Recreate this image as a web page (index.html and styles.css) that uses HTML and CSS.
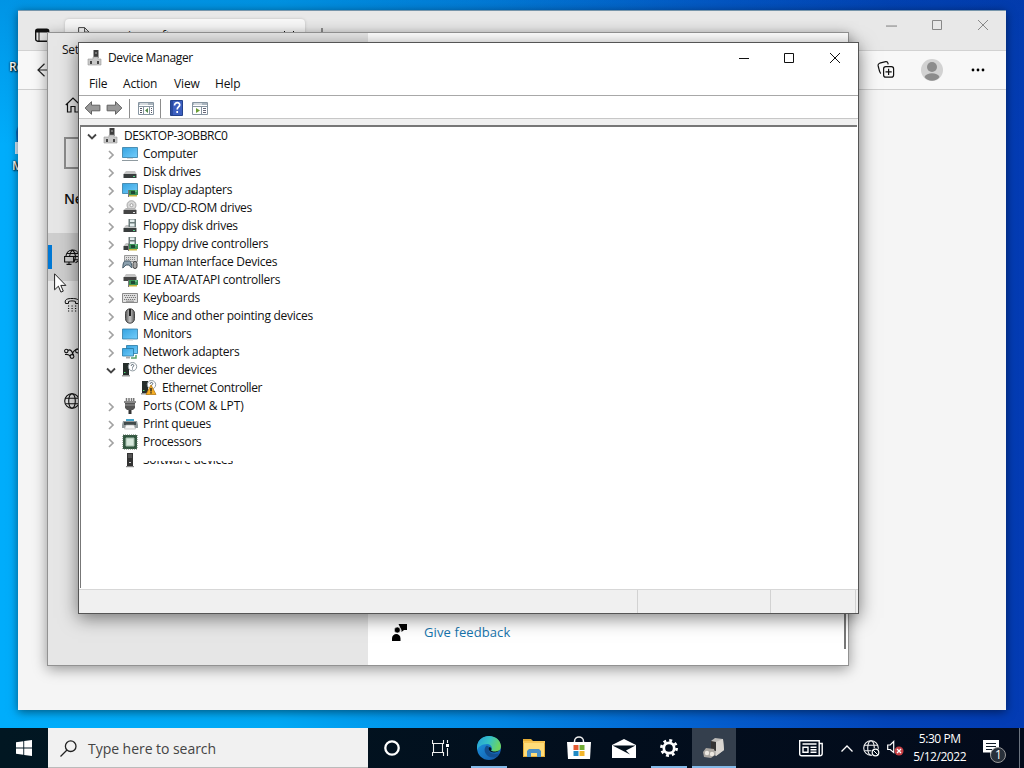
FILE: index.html
```html
<!DOCTYPE html>
<html lang="en">

<head>
    <meta charset="UTF-8" />
    <meta name="viewport" content="width=device-width, initial-scale=1.0" />
    <title>Desktop</title>
    <link rel="stylesheet" href="styles.css">
</head>

<body>
    <!-- shared icons -->
    <svg class="sprite" width="0" height="0">
        <defs>
            <linearGradient id="screen" x1="0" y1="0" x2="1" y2="1">
                <stop offset="0" stop-color="#35a3e0" />
                <stop offset="1" stop-color="#74cdfb" />
            </linearGradient>
            <linearGradient id="metal" x1="0" y1="0" x2="1" y2="0">
                <stop offset="0" stop-color="#555" />
                <stop offset=".5" stop-color="#c8c8c8" />
                <stop offset="1" stop-color="#555" />
            </linearGradient>
            <symbol id="chev-right" viewBox="0 0 16 16"><path d="M6 5l4 4-4 4" fill="none" stroke="#a2a2a2" stroke-width="1.700" /></symbol>
            <symbol id="chev-down" viewBox="0 0 16 16"><path d="M4 6.500l4 4 4-4" fill="none" stroke="#444" stroke-width="1.800" /></symbol>
            <symbol id="pc" viewBox="0 0 16 16">
                <path d="M6.500 0h5v8h-5z" fill="#3c3c3c" /><path d="M8 2h2v2H8z" fill="#777" />
                <path d="M1 9h5V7h5v2h3v6H1z" fill="#c9c9c9" stroke="#999" stroke-width=".6" />
                <path d="M3 11h2v3H3zM10 11h2v3h-2z" fill="#444" />
            </symbol>
            <symbol id="computer" viewBox="0 0 16 16">
                <path d="M.5 1.500h15v10H.5z" fill="url(#screen)" stroke="#347ca5" stroke-width=".8" />
                <path d="M5 12h6v1H5z" fill="#d8d8d8" /><path d="M0 14h16v1H0z" fill="#8f9aa0" />
            </symbol>
            <symbol id="disk" viewBox="0 0 16 16">
                <path d="M4 7h9l1.500 3h-13z" fill="#c3c3c3" /><path d="M1.500 10h13v4h-13z" fill="#383d3d" />
                <path d="M11 12h2v1h-2z" fill="#58d58b" />
            </symbol>
            <symbol id="board" viewBox="0 0 16 16">
                <path d="M6 8h10v5H6z" fill="#3a9156" /><path d="M9 9h4v3H9z" fill="#1d4a33" /><path d="M7 13h8v1.500H7z" fill="#c6b43d" /><path d="M6 8h1v7H6z" fill="#777" />
                <path d="M13 8.500h2v1h-2z" fill="#8de3a7" />
            </symbol>
            <symbol id="display" viewBox="0 0 16 16">
                <path d="M.5 1.500h15v10H.5z" fill="url(#screen)" stroke="#347ca5" stroke-width=".8" />
                <use href="#board" />
            </symbol>
            <symbol id="dvd" viewBox="0 0 16 16">
                <circle cx="9.500" cy="5.200" r="4.500" fill="#d9d9d9" stroke="#999" stroke-width=".8" /><circle cx="9.500" cy="5.200" r="1.500" fill="#fff" stroke="#888" stroke-width=".7" />
                <path d="M4 8h9l1.500 2h-13z" fill="#b5b5b5" /><path d="M1.500 10h13v4h-13z" fill="#444" /><path d="M11 12h2v1h-2z" fill="#ddd" />
            </symbol>
            <symbol id="floppy" viewBox="0 0 16 16">
                <use href="#disk" /><path d="M6.500 1h7.500v8H6.500z" fill="#6d7c7c" /><path d="M8 1.500h4.500v2.500H8zM8 5.500h4.500v3H8z" fill="#e5eeee" />
            </symbol>
            <symbol id="floppy-ctl" viewBox="0 0 16 16"><use href="#floppy" /><use href="#board" /></symbol>
            <symbol id="hid" viewBox="0 0 16 16">
                <path d="M2.500 1.500h13v6h-13z" fill="#ddd" stroke="#999" /><path d="M4 3.500h10M4 5.500h10" stroke="#888" stroke-dasharray="1 1" />
                <path d="M.8 14c0-4 1-7 2.500-7h4c1.500 0 2.500 3 2.500 7l-3-3H4z" fill="#8ba0ae" stroke="#465b69" />
                <rect x="11" y="7.500" width="4" height="7" rx="2" fill="#a9a9a9" stroke="#444" />
            </symbol>
            <symbol id="ide" viewBox="0 0 16 16">
                <path d="M2 5l2-3h9l2 3z" fill="#c4c4c4" /><path d="M1.500 5h13v4h-13z" fill="#444" /><use href="#board" />
            </symbol>
            <symbol id="keyboard" viewBox="0 0 16 16">
                <path d="M.5 3.500h15v9H.5z" fill="#e0e0e0" stroke="#8b8b8b" />
                <path d="M2 5.500h12M3 7.500h11M2 9.500h12" stroke="#777" stroke-dasharray="1.200 .8" /><path d="M4 11.200h8" stroke="#888" />
            </symbol>
            <symbol id="mouse" viewBox="0 0 16 16">
                <rect x="3.500" y=".8" width="9" height="14.400" rx="4.500" fill="url(#metal)" stroke="#444" /><path d="M8 1v7" stroke="#222" stroke-width="2" />
            </symbol>
            <symbol id="monitor" viewBox="0 0 16 16">
                <path d="M.5 3h15v10H.5z" fill="url(#screen)" stroke="#347ca5" stroke-width=".8" /><path d="M5 13.500h6v1H5z" fill="#ccc" />
            </symbol>
            <symbol id="network" viewBox="0 0 16 16">
                <path d="M4.500 1.500h11v8h-11z" fill="url(#screen)" stroke="#2578a5" stroke-width=".8" />
                <path d="M.5 4.500h11v7.500H.5z" fill="url(#screen)" stroke="#2578a5" stroke-width=".8" />
                <path d="M4 12.500h4v2H4z" fill="#aaa" /><path d="M9 14h5v-3" fill="none" stroke="#56a067" stroke-width="1.500" />
            </symbol>
            <symbol id="other" viewBox="0 0 16 16">
                <path d="M1 1h6v12H1z" fill="#262e2b" /><path d="M0 13h8v1.500H0z" fill="#999" /><path d="M2 10h1.500v1H2z" fill="#50d877" />
                <circle cx="10.500" cy="4.700" r="4.200" fill="#fff" stroke="#8f9aa0" />
                <path d="M9.200 3.800c0-2 2.700-1.700 2.500-.1 0 .9-1.200 1-1.200 2M10.500 6.500v1" fill="none" stroke="#4f5f6a" />
            </symbol>
            <symbol id="warning" viewBox="0 0 16 16">
                <use href="#other" /><path d="M10 5l5 9.500H5z" fill="#f6ae22" stroke="#b57a18" stroke-width=".8" /><path d="M10 8v3.500M10 12.300v1.200" stroke="#222" stroke-width="1.400" />
            </symbol>
            <symbol id="port" viewBox="0 0 16 16">
                <path d="M4.500 0v3M7 0v3M9.500 0v3M11.700 0v3" stroke="#777" stroke-width="1.500" /><path d="M2 3h12v2H2z" fill="#888" />
                <path d="M3 5h10v5l-2 2H5l-2-2z" fill="#565656" /><path d="M3 7h10" stroke="#999" /><path d="M6.500 12h3v4h-3z" fill="#333" />
            </symbol>
            <symbol id="printer" viewBox="0 0 16 16">
                <path d="M4 3h8v3H4z" fill="#43a4ca" /><path d="M1 5h14l1 4v3H0V9z" fill="#929b9d" /><path d="M2 6h12v3H2z" fill="#414a4a" />
                <path d="M4 9h8l1.500 4h-11z" fill="#f8f8f8" stroke="#aaa" stroke-width=".6" />
            </symbol>
            <symbol id="cpu" viewBox="0 0 16 16">
                <path d="M1 1h14v14H1z" fill="#31563f" stroke="#526a59" stroke-dasharray="1 1" /><path d="M4 4h8v8H4z" fill="#d7e8dc" stroke="#a3bcaa" />
            </symbol>
            <symbol id="software" viewBox="0 0 16 16">
                <path d="M5 1h6v13H5z" fill="#333" /><path d="M6 3h4M6 5h4" stroke="#777" /><path d="M7 10h2v1H7z" fill="#ccc" /><path d="M4 14h8v1.200H4z" fill="#888" />
            </symbol>
            <symbol id="arrow-left" viewBox="0 0 16 16"><path d="M.6 8L7 1.700v3.500h8.400v5.600H7v3.500z" fill="#989898" stroke="#606060" stroke-linejoin="round" /></symbol>
            <symbol id="panel" viewBox="0 0 16 16">
                <path d="M.5 2.500h15v12H.5z" fill="#fff" stroke="#8795a1" /><path d="M1 3h14v2H1z" fill="#aab5be" /><path d="M2 4h8" stroke="#fff" /><path d="M1 6.500h14" stroke="#8795a1" />
            </symbol>
            <symbol id="min" viewBox="0 0 10 10"><path d="M0 5.500h10" fill="none" stroke="currentColor" /></symbol>
            <symbol id="max" viewBox="0 0 10 10"><path d="M.5.5h9v9h-9z" fill="none" stroke="currentColor" /></symbol>
            <symbol id="close" viewBox="0 0 10 10"><path d="M0 0l10 10M10 0L0 10" fill="none" stroke="currentColor" /></symbol>
            <symbol id="globe" viewBox="0 0 16 16">
                <g fill="none" stroke="currentColor" stroke-width="1.100"><circle cx="8" cy="8" r="7.300" /><ellipse cx="8" cy="8" rx="3.300" ry="7.300" /><path d="M1.500 5.300h13M1.500 10.700h13" /></g>
            </symbol>
        </defs>
    </svg>

    <div class="desktop">
        <div class="shortcut recycle">Re</div>
        <div class="shortcut edge-link">
            <svg width="28" height="60"><path d="M4 14C6 5 11 1 20 0v30H5z" fill="#0869be" /><path d="M3 24h20v12H3z" fill="#d9efff" /></svg>
            <span>Mi</span>
        </div>

        <div class="window browser">
            <div class="browser-tabs">
                <svg class="tab-menu" width="16" height="16" viewBox="0 0 16 16"><rect x="1.700" y="2.200" width="13" height="12" rx="2" fill="none" stroke="#111" stroke-width="1.400" /><path d="M2 2.500h12v3H2z" fill="#111" /><path d="M5 5v9" stroke="#111" /></svg>
                <div class="tab">
                    <svg width="12" height="16" viewBox="0 0 12 16"><path d="M.6.6h6l4.500 4.500V15H.6zM6.600.6v4.500h4.500" fill="none" stroke="#444" /></svg>
                    <span>go.microsoft.com</span>
                    <svg class="tab-close" width="10" height="10"><use href="#close" /></svg>
                </div>
                <svg class="tab-add" width="12" height="12"><path d="M6 0v12M0 6h12" stroke="#333" /></svg>
                <div class="controls">
                    <span><svg width="11" height="11"><use href="#min" /></svg></span>
                    <span><svg width="10" height="10"><use href="#max" /></svg></span>
                    <span><svg width="10" height="10"><use href="#close" /></svg></span>
                </div>
            </div>
            <div class="browser-bar">
                <svg class="back" width="16" height="14" viewBox="0 0 16 14"><path d="M7.500.8L1 7l6.500 6.200M1 7h15" fill="none" stroke="#222" stroke-width="1.200" /></svg>
                <svg class="collections" width="18" height="18" viewBox="0 0 18 18"><g fill="none" stroke="#111" stroke-width="1.200"><path d="M4 12.500C2.500 12 2.500 10 1.200 5c-.4-1.700.2-2.400 1.500-2.800l6-1.500c1.300-.2 2 .3 2.300 1.700l.2 1" /><rect x="6.600" y="5.600" width="10" height="10.500" rx="2.200" /><path d="M8.500 10.800h6.200M11.600 7.700v6.200" /></g></svg>
                <svg class="avatar" width="22" height="22" viewBox="0 0 22 22"><circle cx="11" cy="11" r="11" fill="#d2d2d2" /><circle cx="11" cy="8" r="5" fill="#8c8c8c" /><path d="M3.500 18c2-5 13-5 15 0-3.500 5-11.500 5-15 0z" fill="#8c8c8c" /></svg>
                <svg class="dots" width="14" height="4"><circle cx="2" cy="2" r="1.400" /><circle cx="7" cy="2" r="1.400" /><circle cx="12" cy="2" r="1.400" /></svg>
            </div>
        </div>

        <div class="window settings">
            <div class="settings-nav">
                <div class="settings-title">Set</div>
                <svg class="home" width="16" height="16" viewBox="0 0 16 16"><path d="M.8 8L8 1l7.200 7M2.500 6.500V15H6V9.500h4V15h3.500V6.500" fill="none" stroke="#111" stroke-width="1.200" /></svg>
                <div class="settings-search">F</div>
                <h2>Net</h2>
                <ul class="nav-list">
                    <li class="nav-item active"><svg width="16" height="16" viewBox="0 0 16 16"><g fill="none" stroke="#111" stroke-width="1.100"><path d="M2 7.500a6.700 6.700 0 1 1 9.500 6.300M3 4.500h11.500M8.500.8C6 3 5.700 5 5.700 7.500M8.500.8c3 3 3.500 8 1.500 12.500M2 7.500h13.300M10 10.800h4.500" /><path d="M.6 7.500h9v5.500h-9zM5 13v2M2.500 15.400h5" /></g></svg></li>
                    <li class="nav-item"><svg width="16" height="16" viewBox="0 0 16 16"><path d="M1.500 6.500C0 2 4 1.500 8 1.500S16 2 14.500 6.500h-3v-2c-2-.8-5-.8-7 0v2z" fill="none" stroke="#111" /><path d="M4 9h9M4 11.500h9M4 14h9" stroke="#111" stroke-dasharray="1.200 2.300" /></svg></li>
                    <li class="nav-item"><svg width="16" height="16" viewBox="0 0 16 16"><g fill="none" stroke="#111" stroke-width="1.100"><circle cx="2.300" cy="6" r="1.700" /><circle cx="8" cy="11.500" r="1.900" /><circle cx="13.500" cy="6" r="1.900" /><path d="M4 5.500C7 3.500 8 7 9.500 10M6.300 11C4.500 9.500 3.500 9 1 9.500M8 9.500C9 6.500 10.500 4 15 4" /></g></svg></li>
                    <li class="nav-item"><svg width="16" height="16"><use href="#globe" /></svg></li>
                </ul>
            </div>
            <div class="settings-main">
                <a class="feedback"><svg width="15" height="17" viewBox="0 0 15 17"><path d="M6.500 0H15v6h-3L9.500 8V6z" /><circle cx="5.300" cy="6" r="3" stroke="#fff" stroke-width=".6" /><path d="M0 17v-2.500C0 8.500 8.500 8.500 8.500 14.500V17z" /></svg>Give feedback</a>
                <div class="scrollbar"></div>
            </div>
        </div>

        <div class="window manager">
            <div class="title-bar">
                <svg width="16" height="16"><use href="#pc" /></svg>
                <span>Device Manager</span>
                <div class="controls">
                    <span><svg class="minimize" width="10" height="10"><use href="#min" /></svg></span>
                    <span><svg width="10" height="10"><use href="#max" /></svg></span>
                    <span><svg width="10" height="10"><use href="#close" /></svg></span>
                </div>
            </div>
            <ul class="menu">
                <li class="file">File</li>
                <li class="action">Action</li>
                <li class="view">View</li>
                <li>Help</li>
            </ul>
            <div class="tools">
                <svg width="17" height="16"><use href="#arrow-left" /></svg>
                <svg class="forward" width="17" height="16"><use href="#arrow-left" /></svg>
                <i class="sep"></i>
                <svg width="16" height="16" viewBox="0 0 16 16"><use href="#panel" /><path d="M5.500 7v7M11.500 7v7" stroke="#8795a1" /><path d="M2 8.500h2M2 10.500h2M2 12.500h2M13 8.500h1M13 10.500h1M13 12.500h1" stroke="#556" /><path d="M10 8v5l-3-2.500z" fill="#528a49" /></svg>
                <i class="sep second"></i>
                <svg class="help" width="13" height="16" viewBox="0 0 13 16"><path d="M.5.5h12v15H.5z" fill="#3c5fc0" stroke="#24428c" /><path d="M1 1h2v14H1z" fill="#294aa0" /><path d="M4.500 5.500c0-4 5.800-3.500 5.200-.3-.3 1.900-2.500 1.800-2.500 4.300M7.200 11v2" fill="none" stroke="#fff" stroke-width="1.700" /></svg>
                <svg width="16" height="16" viewBox="0 0 16 16"><use href="#panel" /><path d="M9.500 7v7" stroke="#8795a1" /><path d="M11 8.500h3M11 10.500h3M11 12.500h3" stroke="#667" /><path d="M4 8v5l4-2.500z" fill="#6b9e35" /></svg>
            </div>
            <div class="tree">
                <div class="row root"><svg><use href="#chev-down" /></svg><svg><use href="#pc" /></svg><span>DESKTOP-3OBBRC0</span></div>
                <div class="row"><svg><use href="#chev-right" /></svg><svg><use href="#computer" /></svg><span>Computer</span></div>
                <div class="row"><svg><use href="#chev-right" /></svg><svg><use href="#disk" /></svg><span>Disk drives</span></div>
                <div class="row"><svg><use href="#chev-right" /></svg><svg><use href="#display" /></svg><span>Display adapters</span></div>
                <div class="row"><svg><use href="#chev-right" /></svg><svg><use href="#dvd" /></svg><span>DVD/CD-ROM drives</span></div>
                <div class="row"><svg><use href="#chev-right" /></svg><svg><use href="#floppy" /></svg><span>Floppy disk drives</span></div>
                <div class="row"><svg><use href="#chev-right" /></svg><svg><use href="#floppy-ctl" /></svg><span>Floppy drive controllers</span></div>
                <div class="row"><svg><use href="#chev-right" /></svg><svg><use href="#hid" /></svg><span>Human Interface Devices</span></div>
                <div class="row"><svg><use href="#chev-right" /></svg><svg><use href="#ide" /></svg><span>IDE ATA/ATAPI controllers</span></div>
                <div class="row"><svg><use href="#chev-right" /></svg><svg><use href="#keyboard" /></svg><span>Keyboards</span></div>
                <div class="row"><svg><use href="#chev-right" /></svg><svg><use href="#mouse" /></svg><span>Mice and other pointing devices</span></div>
                <div class="row"><svg><use href="#chev-right" /></svg><svg><use href="#monitor" /></svg><span>Monitors</span></div>
                <div class="row"><svg><use href="#chev-right" /></svg><svg><use href="#network" /></svg><span>Network adapters</span></div>
                <div class="row"><svg><use href="#chev-down" /></svg><svg><use href="#other" /></svg><span>Other devices</span></div>
                <div class="row child"><svg><use href="#warning" /></svg><span>Ethernet Controller</span></div>
                <div class="row ports"><svg><use href="#chev-right" /></svg><svg><use href="#port" /></svg><span>Ports (COM &amp; LPT)</span></div>
                <div class="row"><svg><use href="#chev-right" /></svg><svg><use href="#printer" /></svg><span>Print queues</span></div>
                <div class="row"><svg><use href="#chev-right" /></svg><svg><use href="#cpu" /></svg><span>Processors</span></div>
                <div class="row loading"><svg><use href="#software" /></svg><span>Software devices</span></div>
            </div>
            <div class="status"><span></span><span></span><span></span></div>
        </div>

        <svg class="cursor" width="13" height="20" viewBox="0 0 13 20"><path d="M.6.8v16l3.800-3.600 2.500 5.900 2.400-1-2.500-5.700h5.100z" fill="#fff" stroke="#222" /></svg>
    </div>

    <div class="taskbar">
        <div class="start"><svg width="16" height="16" viewBox="0 0 16 16"><path d="M0 2.300L7.300 1.300v6.300H0zM8.200 1.100L16 0v7.600H8.200zM0 8.500h7.300v6.300L0 13.700zM8.200 8.500H16V16l-7.800-1.100z" fill="#fff" /></svg></div>
        <div class="search"><svg width="17" height="17" viewBox="0 0 17 17"><circle cx="10.700" cy="6.200" r="5.300" fill="none" stroke="#222" stroke-width="1.300" /><path d="M7 10l-6.500 6.500" stroke="#222" stroke-width="1.300" /></svg><span>Type here to search</span></div>
        <div class="task wide"><svg width="16" height="16"><circle cx="8" cy="8" r="6.700" fill="none" stroke="#fff" stroke-width="2.300" /></svg></div>
        <div class="task wide"><svg width="17" height="16" viewBox="0 0 17 16"><path d="M.5 0v3.500h11V0M.5 16v-3.500h11V16M1.500 3.500h9v9h-9zM15.500 0v3M15.500 8v8" fill="none" stroke="#eee" stroke-width="1.100" /><path d="M14 4h3v3h-3z" fill="#fff" /></svg></div>
        <div class="task open"><svg width="24" height="24" viewBox="0 0 24 24">
            <defs>
                <linearGradient id="edge-top" x1="0" y1="0" x2="1" y2=".3"><stop offset="0" stop-color="#249ed9" /><stop offset=".55" stop-color="#36c2c5" /><stop offset="1" stop-color="#6bd461" /></linearGradient>
                <linearGradient id="edge-low" x1="0" y1="0" x2="1" y2="1"><stop offset="0" stop-color="#1d9be5" /><stop offset="1" stop-color="#1253a5" /></linearGradient>
            </defs>
            <circle cx="12" cy="12" r="12" fill="url(#edge-low)" />
            <path d="M0 11C1-4 23-3 24 10c0 6-7 7.500-10 4.500 2-2 .5-6.500-4-6.500C5 8 1 11 0 14z" fill="url(#edge-top)" />
            <path d="M9 10c-4 5 1 12 8 11.500 3-.3 5-3 5.500-4.500-3 2-12 1-10.500-5 .3-1.500-1.500-3-3-2z" fill="#134f91" />
            <path d="M12.500 11c-2 2 0 5.500 4.500 5.500 2.500 0 4.500-1 5.800-2.500-2.800 1.800-7 2-8.800.5 1-1 .5-3-1.500-3.500z" fill="#031421" /></svg></div>
        <div class="task"><svg width="22" height="18" viewBox="0 0 22 18"><path d="M0 0h8l2 2h12v16H0z" fill="#e6ad36" /><path d="M1 4h20v13H1z" fill="#ffdc79" /><path d="M0 2h22v2H0z" fill="#f8c655" /><path d="M4 18v-6l2-2h10l2 2v6h-4v-4H8v4z" fill="#4a8fc5" /></svg></div>
        <div class="task"><svg class="store" width="24" height="24" viewBox="0 0 24 24"><path d="M7.500 7V5.500c0-6 9-6 9 0V7" fill="none" stroke="#eee" stroke-width="1.500" /><path d="M0 6h24l-1 17H1z" fill="#fff" /><path d="M6.500 9h5v5h-5z" fill="#e35a32" /><path d="M12.500 9h5v5h-5z" fill="#72ad35" /><path d="M6.500 15h5v5h-5z" fill="#218bc5" /><path d="M12.500 15h5v5h-5z" fill="#f3b62b" /></svg></div>
        <div class="task"><svg width="24" height="19" viewBox="0 0 24 19"><path d="M0 6L12 0l12 6v13H0z" fill="#fff" /><path d="M.5 6.500h23L14 11.500l4 4z" fill="#03101c" /></svg></div>
        <div class="task open"><svg width="18" height="18" viewBox="0 0 18 18"><circle cx="9" cy="9" r="5.200" fill="none" stroke="#fff" stroke-width="2.700" /><circle cx="9" cy="9" r="7.600" fill="none" stroke="#fff" stroke-width="2.700" stroke-dasharray="2.900 3.070" /></svg></div>
        <div class="task open focused"><svg width="24" height="22" viewBox="0 0 24 22"><path d="M9 4l4-3 8 1 1 11-8 6-5-3z" fill="#bcbab7" /><path d="M9 4l5 1v9l-5-1z" fill="#333" /><path d="M14 5l7-3 1 11-8 6z" fill="#d8d5d1" /><path d="M1 15l3-4 8 1 1 6-4 3-7-1z" fill="#aaa6a1" /><circle cx="5" cy="16" r="2.200" fill="#ece8e1" /><circle cx="10" cy="17" r="2.200" fill="#ece8e1" /></svg></div>

        <div class="tray">
            <svg class="news" width="24" height="17" viewBox="0 0 24 17"><g fill="none" stroke="#fff" stroke-width="1.400"><path d="M.7.700h19.500v15H2.700c-1.300 0-2-.7-2-2zM20 3.500h3.200v10c0 1.500-.8 2.200-2.500 2.200M3.500 4h14M4 7.200h5v5H4zM11.500 7.200h6M11.500 9.700h6M11.500 12.200h6" /></g></svg>
            <svg class="up" width="12" height="7"><path d="M.5 6.500L6 1l5.500 5.500" fill="none" stroke="#fff" stroke-width="1.300" /></svg>
            <svg class="net" width="17" height="17" viewBox="0 0 17 17"><g color="#eee"><use href="#globe" width="16" height="16" /></g><circle cx="12.500" cy="12.500" r="4.600" fill="#03101c" /><circle cx="12.500" cy="12.500" r="3.300" fill="none" stroke="#fff" stroke-width="1.200" /><path d="M10.200 10.200l4.600 4.600" stroke="#fff" /></svg>
            <svg class="volume" width="17" height="16" viewBox="0 0 17 16"><path d="M.7 5h2.500l3.500-3.500v11L3.200 9.500H.7z" fill="none" stroke="#fff" stroke-width="1.200" /><circle cx="12" cy="11" r="4.500" fill="#c63f44" /><path d="M10 9l4 4M14 9l-4 4" stroke="#fff" stroke-width="1.300" /></svg>
            <div class="clock"><span class="time">5:30 PM</span><span>5/12/2022</span></div>
            <div class="notice">
                <svg width="16" height="17" viewBox="0 0 16 17"><path d="M0 0h16v12.500h-5L7 16v-3.500H0z" fill="#fff" /><path d="M3 3.500h10M3 6.500h10M3 9.500h6" stroke="#111c28" stroke-width="1.200" /></svg>
                <span class="badge">1</span>
            </div>
        </div>
    </div>
</body>

</html>
```
FILE: styles.css
```css
* {
    margin: 0;
    padding: 0;
    box-sizing: border-box;
}

body {
    width: 1024px;
    height: 768px;
    overflow: hidden;
    font-family: "Open Sans", "Noto Sans", sans-serif;
    font-size: 12px;
    letter-spacing: -0.26px;
    color: #111;
}

ul {
    list-style: none;
}

svg {
    display: block;
    flex-shrink: 0;
}

.sprite {
    position: absolute;
}

.desktop {
    position: relative;
    height: 728px;
    overflow: hidden;
    background: linear-gradient(to top, transparent 80%, rgba(0, 60, 150, 0.22)), linear-gradient(90deg, #00adfb 0, #00a9f5 27%, #0389e5 48%, #045dcd 70%, #0344b9 87%, #033bb3 100%);
}

.shortcut {
    position: absolute;
    color: #fff;
    font-weight: 600;
    white-space: nowrap;
    text-shadow: 1px 1px 2px #000, 0 0 2px #000;
}

.recycle {
    left: 9px;
    top: 58px;
}

.edge-link {
    left: 12px;
    top: 118px;
}

.edge-link span {
    display: block;
    margin-top: -21px;
}

/* windows */
.window {
    position: absolute;
}

.controls {
    display: flex;
    height: 100%;
    margin-left: auto;
}

.controls span {
    display: flex;
    width: 46px;
    align-items: center;
    justify-content: center;
}

.browser {
    left: 18px;
    top: 10px;
    width: 988px;
    height: 700px;
    background: #f5f5f5;
    border-top: 1px solid #7896ab;
    box-shadow: 0 2px 9px rgba(0, 0, 0, 0.5);
}

.browser-tabs {
    display: flex;
    height: 40px;
    background: #e8e8e8;
    border-bottom: 1px solid #d2d2d2;
}

.browser-tabs .controls {
    height: 28px;
    color: #888;
}

.tab-menu {
    margin: 16px 0 0 16px;
}

.tab {
    display: flex;
    width: 240px;
    margin: 8px 0 0 15px;
    padding: 8px 11px 0 13px;
    background: #f7f7f7;
    border-radius: 4px 4px 0 0;
    box-shadow: 0 0 3px #bbb;
}

.tab span {
    margin-left: 10px;
    letter-spacing: 0;
}

.tab-close {
    margin: 4px 0 0 auto;
}

.tab-add {
    margin: 17px 0 0 11px;
}

.browser-bar {
    display: flex;
    height: 39px;
    align-items: center;
    background: #f8f8f8;
    border-bottom: 1px solid #cfcfcf;
}

.back {
    margin-left: 19px;
}

.collections {
    margin-left: auto;
}

.avatar {
    margin-left: 26px;
}

.dots {
    margin: 0 21px 0 28px;
}

.settings {
    left: 47px;
    top: 32px;
    display: flex;
    width: 802px;
    height: 634px;
    border: 1px solid #929292;
    background: #fff;
    box-shadow: 0 3px 13px rgba(0, 0, 0, 0.4);
}

.settings-nav {
    width: 320px;
    background: #e6e6e6;
}

.settings-title {
    padding: 8px 0 0 14px;
    line-height: 17px;
}

.home {
    margin: 39px 0 0 17px;
}

.settings-search {
    width: 288px;
    height: 32px;
    margin: 24px 0 0 16px;
    padding-left: 11px;
    border: 2px solid #8c8c8c;
    color: #666;
    font-size: 14px;
    line-height: 27px;
}

.settings-nav h2 {
    margin: 19px 0 0 16px;
    font-size: 14px;
    font-weight: 600;
    line-height: 22px;
}

.nav-list {
    margin-top: 23px;
}

.nav-item {
    display: flex;
    height: 48px;
    align-items: center;
    padding-left: 16px;
}

.nav-item.active {
    background: linear-gradient(#0078d4, #0078d4) 0 12px / 4px 24px no-repeat #cecece;
}

.settings-main {
    display: flex;
    flex: 1;
    align-items: flex-end;
}

.feedback {
    display: flex;
    align-items: center;
    gap: 17px;
    margin: 0 0 23px 24px;
    color: #1674ac;
    font-size: 13px;
    letter-spacing: 0.1px;
    line-height: 20px;
}

.scrollbar {
    width: 2px;
    height: 600px;
    margin: 0 2px 16px auto;
    background: #777;
}

/* device manager */
.manager {
    left: 78px;
    top: 42px;
    display: flex;
    flex-direction: column;
    width: 781px;
    height: 572px;
    border: 1px solid #555;
    background: #fff;
    box-shadow: 0 4px 17px rgba(0, 0, 0, 0.5);
}

.title-bar {
    display: flex;
    height: 29px;
    align-items: center;
    padding-left: 8px;
}

.title-bar > span {
    margin-left: 5px;
    letter-spacing: -0.35px;
}

.title-bar .controls {
    height: 28px;
}

.minimize {
    margin-left: 2px;
}

.menu {
    display: flex;
    height: 24px;
    padding-left: 10px;
    border-bottom: 1px solid #a8a8a8;
    letter-spacing: -0.15px;
    line-height: 24px;
}

.file {
    width: 34px;
}

.action {
    width: 51px;
}

.view {
    width: 41px;
}

.tools {
    display: flex;
    height: 23px;
    align-items: center;
    padding: 2px 0 0 5px;
    border-bottom: 1px solid #c7c7c7;
}

.forward {
    margin-left: 5px;
    transform: scaleX(-1);
}

.sep {
    width: 1px;
    height: 19px;
    margin: 0 8px 0 6px;
    background: #8c8c8c;
}

.help {
    margin: 0 9px 0 1px;
}

.tree {
    flex: 1;
    margin: 6px 1px 1px;
    border-top: 2px solid #777;
    border-left: 1px solid #777;
    box-shadow: 0 -6px #f0f0f0;
    overflow: hidden;
}

.row {
    display: flex;
    height: 18px;
    align-items: center;
    padding-left: 22px;
}

.row svg {
    width: 16px;
    height: 16px;
    margin-right: 5px;
}

.row svg:first-child {
    margin-right: 3px;
}

.row span {
    line-height: 18px;
    white-space: nowrap;
}

.row.root {
    padding-left: 3px;
}

.row.root span {
    letter-spacing: -0.42px;
}

.row.child {
    padding-left: 60px;
}

.row.child span {
    letter-spacing: -0.4px;
}

.row.ports span {
    letter-spacing: -0.1px;
}

.row.loading {
    padding-left: 41px;
}

.row.child svg,
.row.loading svg {
    margin-right: 5px;
}

/* name is only half painted while the list refreshes */
.row.loading span {
    clip-path: inset(10px 0 0 0);
}

.status {
    display: flex;
    height: 24px;
    background: #f0f0f0;
    border-top: 1px solid #d7d7d7;
}

.status span {
    width: 559px;
    border-right: 1px solid #d2d2d2;
}

.status span + span {
    width: 133px;
}

.status span:last-child {
    width: 85px;
}

.cursor {
    position: absolute;
    left: 54px;
    top: 273px;
}

/* taskbar */
.taskbar {
    display: flex;
    height: 40px;
    background: linear-gradient(90deg, #011722, #020e1d 60%, #030b1b);
    color: #fff;
}

.start {
    display: flex;
    width: 48px;
    align-items: center;
    justify-content: center;
}

.search {
    display: flex;
    width: 320px;
    align-items: center;
    gap: 11px;
    padding: 1px 0 0 12px;
    background: #f1f1f1;
    border-bottom: 1px solid #bbb;
    color: #444;
    font-size: 14px;
    letter-spacing: -0.04px;
}

.task {
    display: flex;
    width: 45px;
    align-items: center;
    justify-content: center;
}

.task.wide {
    width: 48px;
}

.task.wide + .open {
    margin-left: 2px;
}

.task.open {
    background: linear-gradient(#83b9e8, #83b9e8) center bottom / 36px 2px no-repeat;
}

.task.focused {
    width: 44px;
    margin-left: 1px;
    background: linear-gradient(#83b9e8, #83b9e8) center bottom / 100% 2px no-repeat #343f4d;
}

.store {
    margin-top: -1px;
}

.tray {
    display: flex;
    width: 221px;
    align-items: center;
    margin: 0 4px 0 auto;
}

.up {
    margin-left: 18px;
}

.net {
    margin-left: 10px;
}

.volume {
    margin-left: 7px;
}

.clock {
    display: flex;
    flex-direction: column;
    width: 64px;
    margin-left: 4px;
    align-items: center;
    line-height: 18px;
    letter-spacing: -0.45px;
}

.notice {
    position: relative;
    width: 37px;
    height: 40px;
    margin-left: 12px;
    padding-top: 12px;
    border-right: 1px solid #6b747f;
}

.badge {
    position: absolute;
    left: 7px;
    top: 19px;
    width: 16px;
    height: 16px;
    border: 1px solid #999;
    border-radius: 50%;
    background: #28303a;
    font-size: 12px;
    line-height: 14px;
    text-align: center;
}
```
